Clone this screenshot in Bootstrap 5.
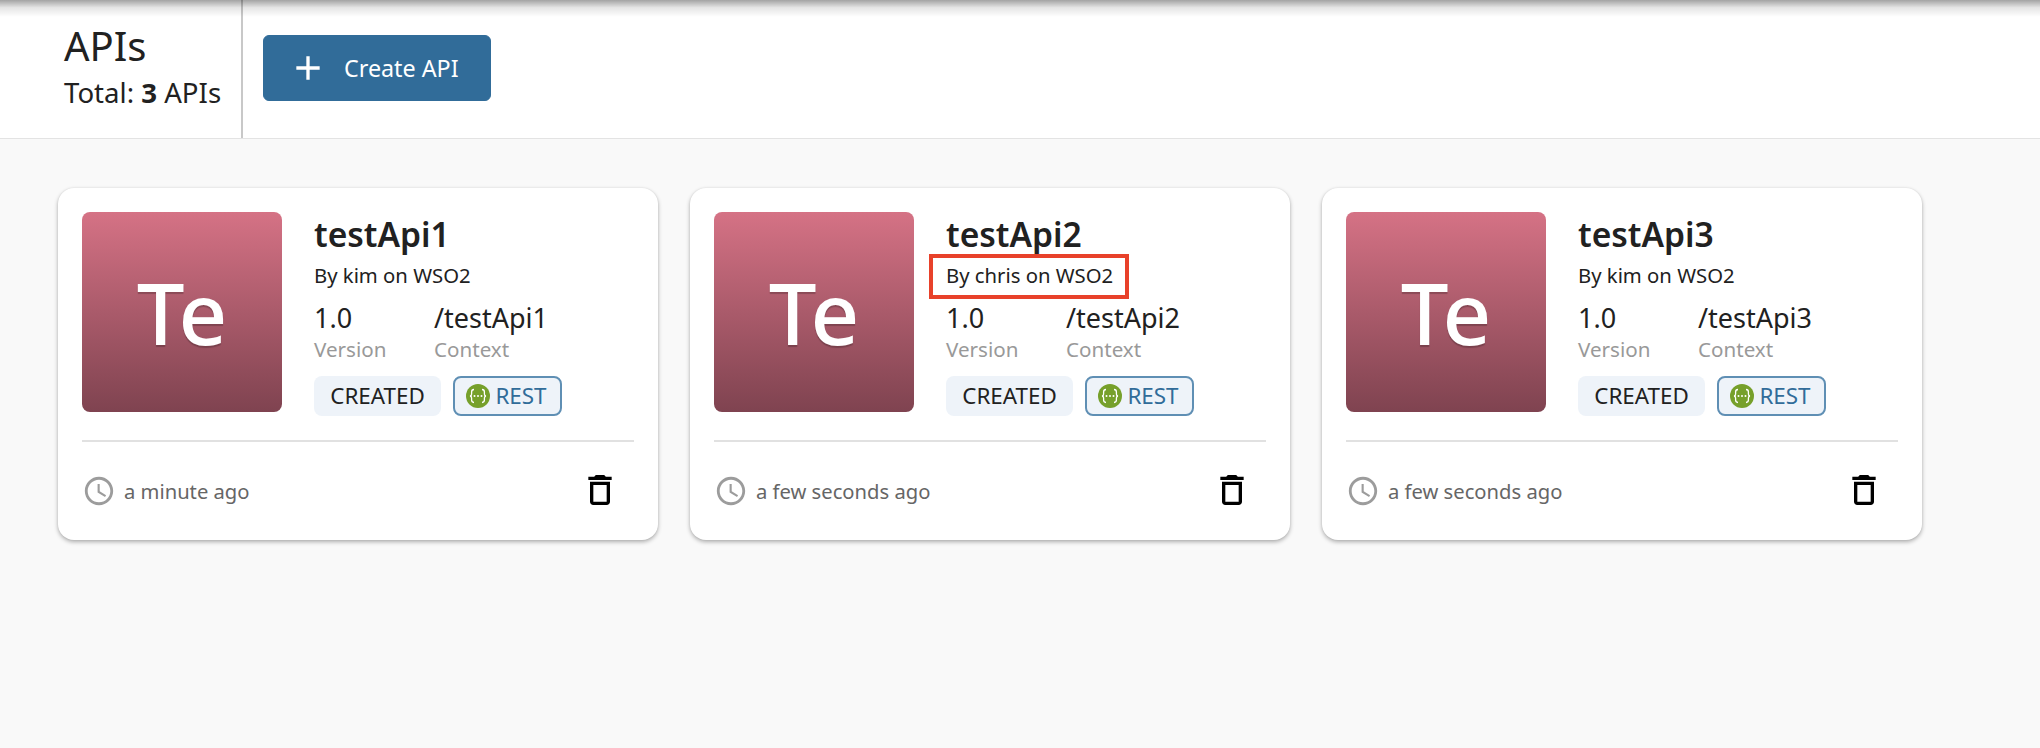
<!DOCTYPE html>
<html lang="en"><head><meta charset="utf-8"><title>APIs</title>
<link rel="stylesheet" href="https://cdn.jsdelivr.net/npm/bootstrap@5.3.0/dist/css/bootstrap.min.css">
<style>
html,body{height:100%}
body{background:#f9f9f9;font-family:"Noto Sans",sans-serif;color:#212121;position:relative;overflow:hidden}
.top-bar{height:139px;background:#fff;border-bottom:1px solid #e3e3e3;position:relative}
.top-shade{position:absolute;left:0;right:0;top:0;height:17px;background:linear-gradient(rgba(0,0,0,.36),rgba(0,0,0,.1) 45%,rgba(0,0,0,0));pointer-events:none}
.title-box{width:243px;padding:18px 0 0 64px;border-right:2px solid #c8c8c8}
.page-title{font-size:40px;line-height:56px;font-weight:400;margin:0}
.page-sub{font-size:27.6px;line-height:36px;margin:0;white-space:nowrap}
.page-sub b{font-weight:700}
.create-btn{width:228px;height:66px;margin:35px 0 0 20px;background:#316c99;border:1px solid #316c99;border-radius:6px;color:#fff;font-size:23.3px;padding:0 0 0 24px;gap:16px}
.create-btn:hover{background:#316c99;color:#fff}
.create-btn svg{width:40px;height:40px;fill:#fff}
.card-row{padding:49px 0 0 58px;gap:32px}
.api-card{width:600px;height:352px;border:0;border-radius:16px;padding:24px 24px 0;background:#fff;box-shadow:0 2px 4px rgba(0,0,0,.3),0 0 2px rgba(0,0,0,.08)}
.thumb{width:200px;height:200px;border-radius:8px;background:linear-gradient(#d57285,#7f4350);color:#fff;font-size:85px;font-weight:500;line-height:200px;text-align:center;text-shadow:0 2px 1px rgba(0,0,0,.22)}
.info{padding-left:32px;min-width:0}
.api-name{font-size:33.6px;line-height:44px;font-weight:600;margin:0;color:#212121}
.api-by{font-size:20.3px;line-height:26px;margin:6px 0 0}
.meta-row{margin-top:13px}
.meta-cell-a{width:120px}
.meta-val{font-size:27px;line-height:34px}
.meta-key{font-size:20.6px;line-height:28px;color:#999}
.chip-row{margin-top:13px;gap:12px}
.tag-chip{height:40px;border-radius:8px;background:#eef3f9;font-size:22.4px;padding:0 16px;white-space:nowrap;width:127px;justify-content:center}
.tag-rest{width:109px;border:2px solid #5f8fb4;color:#316c99;padding:0 2px 0 0;gap:5px}
.tag-rest svg{width:24px;height:24px}
.rule{height:2px;background:#e1e1e1;margin-top:24px}
.foot{height:100px;padding-right:14px}
.when{color:#666;font-size:20.2px;gap:8px}
.when svg{width:34px;height:34px;fill:#9c9c9c}
.trash{width:40px;height:40px;fill:#000;margin-top:-2px}
.mark-box{position:absolute;left:929px;top:254px;width:200px;height:45px;border:4px solid #e8412a;pointer-events:none}
</style></head><body>
<svg width="0" height="0" class="position-absolute"><defs>
<symbol id="rest-ico" viewBox="0 0 24 24"><circle cx="12" cy="12" r="12" fill="#76a02b"/><path d="M8 5.5c-2 0-2.4 1-2.4 2.4v2c0 1.2-.5 2-1.6 2.1 1.1.1 1.6.9 1.6 2.1v2c0 1.4.4 2.4 2.4 2.4M16 5.5c2 0 2.4 1 2.4 2.4v2c0 1.2.5 2 1.6 2.1-1.1.1-1.6.9-1.6 2.1v2c0 1.400-.4 2.400-2.400 2.400" fill="none" stroke="#fff" stroke-width="1.300"/><circle cx="8.500" cy="12" r="1" fill="#fff"/><circle cx="12" cy="12" r="1" fill="#fff"/><circle cx="15.500" cy="12" r="1" fill="#fff"/></symbol>
<symbol id="clock-ico" viewBox="0 0 24 24"><path d="M11.99 2C6.47 2 2 6.48 2 12s4.47 10 9.99 10C17.52 22 22 17.52 22 12S17.52 2 11.99 2zM12 20c-4.42 0-8-3.58-8-8s3.58-8 8-8 8 3.58 8 8-3.58 8-8 8zm.5-13H11v6l5.25 3.15.75-1.23-4.5-2.67z"/></symbol>
<symbol id="trash-ico" viewBox="0 0 24 24"><path d="M6 19c0 1.1.9 2 2 2h8c1.1 0 2-.9 2-2V7H6v12zM8 9h8v10H8V9zm7.5-5l-1-1h-5l-1 1H5v2h14V4z"/></symbol>
</defs></svg>
<div class="top-bar d-flex">
  <div class="title-box"><h1 class="page-title">APIs</h1><p class="page-sub">Total: <b>3</b> APIs</p></div>
  <div><button class="btn create-btn d-flex align-items-center" type="button"><svg viewBox="0 0 24 24"><path d="M19 13h-6v6h-2v-6H5v-2h6V5h2v6h6v2z"/></svg><span>Create API</span></button></div>
  <div class="top-shade"></div>
</div>
<div class="card-row d-flex">
  <div class="card api-card">
    <div class="d-flex"><div class="thumb flex-shrink-0">Te</div>
    <div class="info"><h2 class="api-name">testApi1</h2><div class="api-by">By kim on WSO2</div>
      <div class="meta-row d-flex"><div class="meta-cell-a"><div class="meta-val">1.0</div><div class="meta-key">Version</div></div><div><div class="meta-val">/testApi1</div><div class="meta-key">Context</div></div></div>
      <div class="chip-row d-flex"><span class="tag-chip d-inline-flex align-items-center">CREATED</span><span class="tag-chip tag-rest d-inline-flex align-items-center"><svg><use href="#rest-ico"/></svg>REST</span></div>
    </div></div>
    <div class="rule"></div>
    <div class="foot d-flex align-items-center justify-content-between"><div class="when d-flex align-items-center"><svg><use href="#clock-ico"/></svg>a minute ago</div><svg class="trash"><use href="#trash-ico"/></svg></div>
  </div>
  <div class="card api-card">
    <div class="d-flex"><div class="thumb flex-shrink-0">Te</div>
    <div class="info"><h2 class="api-name">testApi2</h2><div class="api-by">By chris on WSO2</div>
      <div class="meta-row d-flex"><div class="meta-cell-a"><div class="meta-val">1.0</div><div class="meta-key">Version</div></div><div><div class="meta-val">/testApi2</div><div class="meta-key">Context</div></div></div>
      <div class="chip-row d-flex"><span class="tag-chip d-inline-flex align-items-center">CREATED</span><span class="tag-chip tag-rest d-inline-flex align-items-center"><svg><use href="#rest-ico"/></svg>REST</span></div>
    </div></div>
    <div class="rule"></div>
    <div class="foot d-flex align-items-center justify-content-between"><div class="when d-flex align-items-center"><svg><use href="#clock-ico"/></svg>a few seconds ago</div><svg class="trash"><use href="#trash-ico"/></svg></div>
  </div>
  <div class="card api-card">
    <div class="d-flex"><div class="thumb flex-shrink-0">Te</div>
    <div class="info"><h2 class="api-name">testApi3</h2><div class="api-by">By kim on WSO2</div>
      <div class="meta-row d-flex"><div class="meta-cell-a"><div class="meta-val">1.0</div><div class="meta-key">Version</div></div><div><div class="meta-val">/testApi3</div><div class="meta-key">Context</div></div></div>
      <div class="chip-row d-flex"><span class="tag-chip d-inline-flex align-items-center">CREATED</span><span class="tag-chip tag-rest d-inline-flex align-items-center"><svg><use href="#rest-ico"/></svg>REST</span></div>
    </div></div>
    <div class="rule"></div>
    <div class="foot d-flex align-items-center justify-content-between"><div class="when d-flex align-items-center"><svg><use href="#clock-ico"/></svg>a few seconds ago</div><svg class="trash"><use href="#trash-ico"/></svg></div>
  </div>
</div>
<div class="mark-box"></div>
<script src="https://cdn.jsdelivr.net/npm/bootstrap@5.3.0/dist/js/bootstrap.bundle.min.js"></script>
</body></html>
